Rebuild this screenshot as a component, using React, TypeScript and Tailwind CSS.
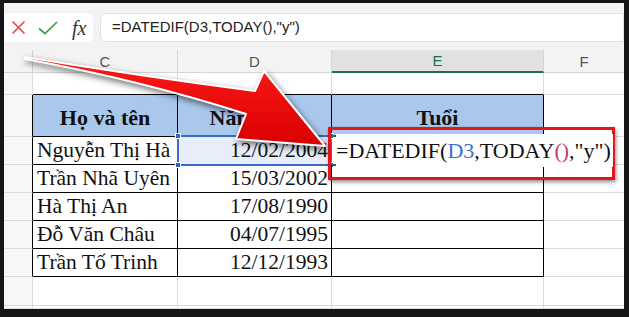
import React from "react";

const serif = { fontFamily: '"Liberation Serif", "Times New Roman", serif' };
const sans = { fontFamily: '"Liberation Sans", Arial, sans-serif' };

const people = [
  ["Nguyễn Thị Hà", "12/02/2004"],
  ["Trần Nhã Uyên", "15/03/2002"],
  ["Hà Thị An", "17/08/1990"],
  ["Đỗ Văn Châu", "04/07/1995"],
  ["Trần Tố Trinh", "12/12/1993"],
];

function Handle({ className }: { className: string }) {
  return <span className={`absolute h-[6px] w-[6px] border border-white bg-[#2f62c6] ${className}`} />;
}

function FormulaBar() {
  return (
    <div className="flex h-[47px] shrink-0 items-start gap-[7px] bg-[#f3f3f3] pt-[10px]" style={sans}>
      <div className="flex h-[29px] w-[89px] items-center rounded-r-md bg-white pl-[7px]">
        <svg width="15" height="15" viewBox="0 0 15 15">
          <path d="M1.5 1.5 L13.5 13.5 M13.5 1.5 L1.5 13.5" stroke="#e2474b" strokeWidth="1.6" fill="none" />
        </svg>
        <svg width="20" height="14" viewBox="0 0 20 14" className="ml-[12px]">
          <path d="M1 7.5 L7 12.5 L19 1" stroke="#3f9a4c" strokeWidth="1.7" fill="none" />
        </svg>
        <span className="ml-[14px] text-[20px] italic leading-none text-[#333]" style={serif}>
          fx
        </span>
      </div>
      <div className="flex h-[29px] flex-1 items-center rounded-l-md border border-[#e2e2e2] bg-white pl-[11px] text-[15px] text-[#222]">
        =DATEDIF(D3,TODAY(),"y")
      </div>
    </div>
  );
}

export default function App() {
  const grid = "border-r border-b border-[#dcdcdc]";
  const tbl = "border-r border-b border-black";
  return (
    <div className="relative h-[317px] w-[629px] bg-[#161616] pb-[8px] pl-[4px] pr-[5px] pt-[3px]">
      <div className="flex h-full w-full flex-col overflow-hidden bg-white">
        <FormulaBar />
        <div
          className="grid flex-1"
          style={{
            gridTemplateColumns: "29px 145px 154px 212px 80px",
            gridTemplateRows: "23px 22px 42px 28px 28px 28px 28px 28px 29px 1fr",
          }}
        >
          {/* column headers */}
          <div className="border-r border-b border-[#d4d4d4] bg-[#f3f3f3]" />
          {["C", "D"].map((c) => (
            <div key={c} className="flex items-center justify-center border-r border-b border-[#d4d4d4] bg-[#f3f3f3] pt-[2px] text-[15px] text-[#555]" style={sans}>
              {c}
            </div>
          ))}
          <div className="flex items-center justify-center border-r border-b-2 border-r-[#d4d4d4] border-b-[#1e7145] bg-[#e1e1e1] pt-[2px] text-[15px] text-[#1e7145]" style={sans}>
            E
          </div>
          <div className="flex items-center justify-center border-b border-[#d4d4d4] bg-[#f3f3f3] pt-[2px] text-[15px] text-[#555]" style={sans}>
            F
          </div>

          {/* row 1 */}
          <div className={`${grid} bg-[#f7f7f7]`} />
          <div className="border-r border-r-[#dcdcdc] border-b border-b-black" />
          <div className="border-r border-r-[#dcdcdc] border-b border-b-black" />
          <div className="border-r border-r-[#dcdcdc] border-b border-b-black" />
          <div className="border-b border-[#dcdcdc]" />

          {/* header row */}
          <div className="border-r border-r-black border-b border-b-[#dcdcdc] bg-[#f7f7f7]" />
          {["Họ và tên", "Năm sinh", "Tuổi"].map((h) => (
            <div key={h} className={`${tbl} flex items-center justify-center bg-[#a9c8ec] pt-[4px] text-[22px] font-bold text-[#111]`} style={serif}>
              {h}
            </div>
          ))}
          <div className="border-b border-[#dcdcdc]" />

          {/* data rows */}
          {people.map(([name, date], i) => (
            <React.Fragment key={name}>
              <div className="border-r border-r-black border-b border-b-[#dcdcdc] bg-[#f7f7f7]" />
              <div className={`${tbl} flex items-center pl-[4px] text-[21.5px] text-[#111]`} style={serif}>
                {name}
              </div>
              <div className={`${tbl} relative flex items-center justify-end pr-[3px] text-[21.5px] text-[#111] ${i === 0 ? "bg-[#e8eef9]" : ""}`} style={serif}>
                {date}
                {i === 0 && (
                  <div className="absolute inset-x-[-1px] top-[-2px] bottom-[-2px] border-2 border-[#3a6bc9]">
                    <Handle className="left-[-4px] top-[-4px]" />
                    <Handle className="bottom-[-4px] left-[-4px]" />
                    <Handle className="right-[-4px] top-[-4px]" />
                    <Handle className="bottom-[-4px] right-[-4px]" />
                  </div>
                )}
              </div>
              <div className={`${tbl} relative flex items-center pl-[4px] text-[22px] text-[#111]`} style={serif}>
                {i === 0 && (
                  <>
                    <div className="absolute left-0 right-[-2px] top-[-2px] bottom-[-2px] border-y-2 border-[#1e7145]">
                      <span className="absolute bottom-[-4px] right-[-3px] h-[6px] w-[6px] border border-white bg-[#1e7145]" />
                    </div>
                    <span className="relative z-10 whitespace-nowrap bg-white pr-[2px]">
                      =DATEDIF(<span className="text-[#3b6fd0]">D3</span>,TODAY<span className="text-[#c8386a]">()</span>,"y")
                    </span>
                  </>
                )}
              </div>
              <div className="border-b border-[#dcdcdc]" />
            </React.Fragment>
          ))}

          {/* empty rows */}
          {[0, 1].map((r) => (
            <React.Fragment key={r}>
              <div className={`${grid} bg-[#f7f7f7]`} />
              <div className={grid} />
              <div className={grid} />
              <div className={grid} />
              <div className="border-b border-[#dcdcdc]" />
            </React.Fragment>
          ))}
        </div>
      </div>

      {/* annotation: red highlight box */}
      <div className="absolute left-[328px] top-[127px] h-[53px] w-[287px] border-[3px] border-[#e4161b] shadow-[1px_2px_4px_rgba(0,0,0,0.45)]" />

      {/* annotation: curved arrow */}
      <svg className="pointer-events-none absolute left-0 top-0 drop-shadow-[2px_3px_3px_rgba(0,0,0,0.55)]" width="629" height="317" viewBox="0 0 629 317">
        <defs>
          <linearGradient id="arrowFill" x1="0" y1="0" x2="0" y2="1">
            <stop offset="0" stopColor="#ff1a1a" />
            <stop offset="1" stopColor="#d80000" />
          </linearGradient>
        </defs>
        <path
          d="M25 57 Q140 76 255 91 L264 71 L325 146 L236 139 L246 114 Q140 80 25 59 Z"
          fill="url(#arrowFill)"
          stroke="#ffffff"
          strokeWidth="2"
          strokeLinejoin="round"
        />
      </svg>
    </div>
  );
}
